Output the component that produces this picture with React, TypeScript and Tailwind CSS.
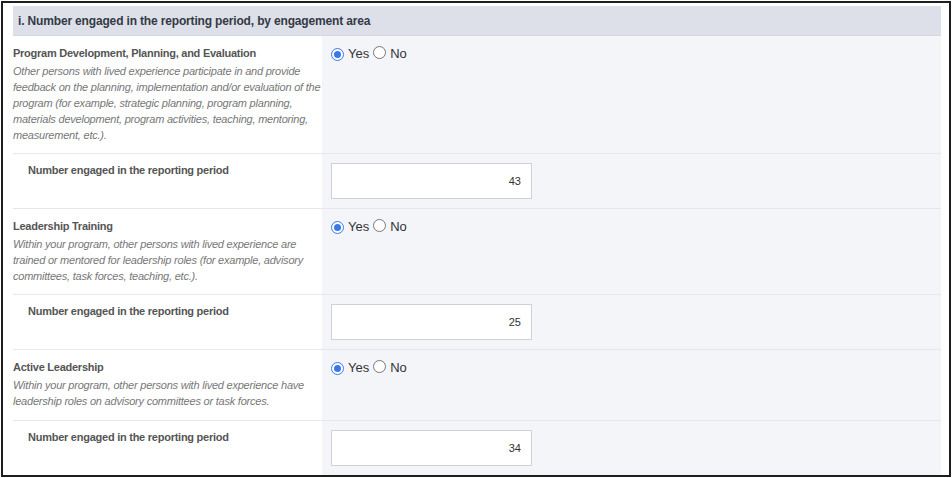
import React from "react";

const font = { fontFamily: '"Liberation Sans", Arial, sans-serif' };

function Radio({ checked }: { checked: boolean }) {
  return checked ? (
    <span className="inline-flex h-[13px] w-[13px] items-center justify-center rounded-full border border-[#3b78e7] bg-white">
      <span className="h-[7px] w-[7px] rounded-full bg-[#3b78e7]" />
    </span>
  ) : (
    <span className="inline-block h-[13px] w-[13px] rounded-full border border-[#767676] bg-white" />
  );
}

function QuestionRow({ title, desc, tall }: { title: string; desc: string; tall?: boolean }) {
  return (
    <div className="flex border-b border-[#e6e7ea]">
      <div className={tall ? "w-[309px] shrink-0 bg-white pt-[10px] pb-[11px]" : "w-[309px] shrink-0 bg-white pt-[10px] pb-[10px]"}>
        <div className="text-[11px] font-bold leading-[14px] tracking-[-0.25px] text-[#555]">{title}</div>
        <div className="mt-[3px] text-[11px] italic leading-[16px] tracking-[-0.22px] text-[#777]">{desc}</div>
      </div>
      <div className="flex-1 bg-[#f4f5f9] pl-[9px] pt-[10px]">
        <div className="flex items-center text-[13px] leading-[14px] text-[#333]">
          <Radio checked />
          <span className="ml-[4px]">Yes</span>
          <span className="ml-[4px]"><Radio checked={false} /></span>
          <span className="ml-[4px]">No</span>
        </div>
      </div>
    </div>
  );
}

function NumberRow({ value }: { value: string }) {
  return (
    <div className="flex border-b border-[#e6e7ea]">
      <div className="w-[309px] shrink-0 bg-white pl-[15px] pt-[9px]">
        <div className="text-[11px] font-bold leading-[14px] tracking-[-0.25px] text-[#555]">
          Number engaged in the reporting period
        </div>
      </div>
      <div className="flex-1 bg-[#f4f5f9] py-[9px] pl-[9px]">
        <div className="flex h-[36px] w-[201px] items-center justify-end border border-[#cfd1d6] bg-white pr-[10px] text-[11px] text-[#333]">
          {value}
        </div>
      </div>
    </div>
  );
}

export default function App() {
  return (
    <div className="h-[478px] w-[952px] bg-white pl-px pt-px" style={font}>
      <div className="h-[476px] w-[950px] overflow-hidden border-2 border-[#1e1e1e] bg-white pl-[10px] pr-[8px] pt-[3px]">
        <div className="flex h-[30px] items-center border-b border-[#d5d8e0] bg-[#dde0e9] pl-[5px] text-[12px] font-bold tracking-[-0.16px] text-[#333a44]">
          i. Number engaged in the reporting period, by engagement area
        </div>
        <QuestionRow
          title="Program Development, Planning, and Evaluation"
          desc="Other persons with lived experience participate in and provide feedback on the planning, implementation and/or evaluation of the program (for example, strategic planning, program planning, materials development, program activities, teaching, mentoring, measurement, etc.)."
        />
        <NumberRow value="43" />
        <QuestionRow
          title="Leadership Training"
          desc="Within your program, other persons with lived experience are trained or mentored for leadership roles (for example, advisory committees, task forces, teaching, etc.)."
        />
        <NumberRow value="25" />
        <QuestionRow
          tall
          title="Active Leadership"
          desc="Within your program, other persons with lived experience have leadership roles on advisory committees or task forces."
        />
        <NumberRow value="34" />
      </div>
    </div>
  );
}
